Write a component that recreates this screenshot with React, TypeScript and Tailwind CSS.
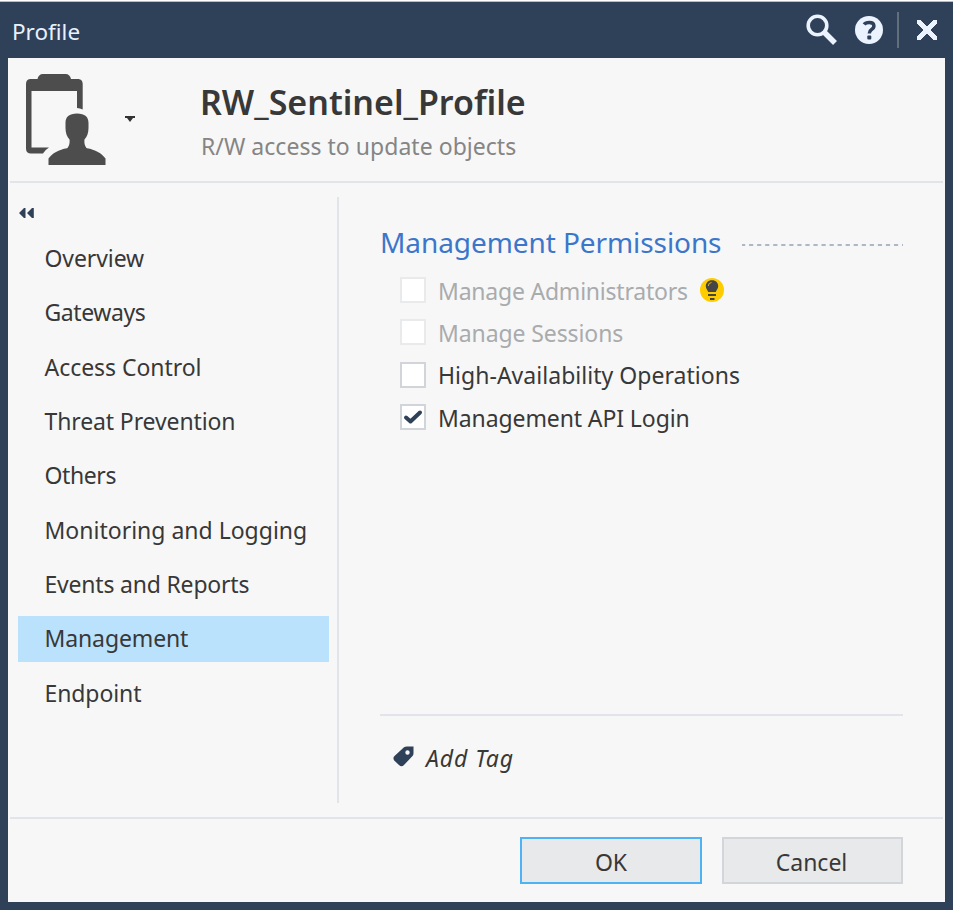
import React from "react";

const navItems = [
  { label: "Overview", tracking: "tracking-[-0.1px]" },
  { label: "Gateways", tracking: "tracking-[-0.4px]" },
  { label: "Access Control", tracking: "tracking-[-0.05px]" },
  { label: "Threat Prevention", tracking: "tracking-[-0.12px]" },
  { label: "Others", tracking: "tracking-[-0.4px]" },
  { label: "Monitoring and Logging", tracking: "tracking-normal" },
  { label: "Events and Reports", tracking: "tracking-[-0.2px]" },
  { label: "Management", tracking: "tracking-[-0.12px]", active: true },
  { label: "Endpoint", tracking: "tracking-[-0.1px]" },
];

const permissions = [
  { label: "Manage Administrators", disabled: true, hint: true, tracking: "tracking-[-0.22px]" },
  { label: "Manage Sessions", disabled: true, tracking: "tracking-[-0.1px]" },
  { label: "High-Availability Operations", tracking: "tracking-[0.03px]" },
  { label: "Management API Login", checked: true, tracking: "tracking-[-0.1px]" },
];

function ProfileIcon() {
  return (
    <svg width="82" height="92" viewBox="25 73 82 92" className="block" fill="#4d4d4d">
      <path
        fillRule="evenodd"
        d="M30 79H37.500C38 76 40 74 43 74H65.500C68.500 74 70.500 76 71 79H78.500Q82.700 79.500 82.700 84V109.500Q80 108.300 77 108V91H31.500V147.500H49Q45.500 149.500 43 153.500H31Q26 153.500 26 148.500V84Q26 79.500 30 79Z"
      />
      <path d="M77 113.500C85 113.500 88.500 117 88.500 123V128C88.500 133 87 137 84.500 139.500C84 143 85 147 87 148.300C95 149.500 102 153.500 105.500 158.500V165H48.500V158.500C52 153.500 59 149.500 67 148.300C69 147 70 143 69.500 139.500C67 137 65.500 133 65.500 128V123C65.500 117 69 113.500 77 113.500Z" />
    </svg>
  );
}

function TitleBar() {
  return (
    <header className="flex h-14 shrink-0 items-center bg-[#2f4059] pl-1">
      <span className="mt-[3px] text-[22.5px] leading-8 text-[#e8f1ff]">Profile</span>
      <div className="ml-auto flex items-center">
        <svg width="34" height="34" viewBox="805 12 34 34" className="mr-4 block" fill="none" stroke="#ebf3ff">
          <circle cx="817.500" cy="24.500" r="9.300" strokeWidth="3.600" />
          <path d="M824.500 31.500L835 42" strokeWidth="5.500" />
        </svg>
        <svg width="28" height="28" viewBox="0 0 28 28" className="block">
          <circle cx="14" cy="14" r="14" fill="#ebf3ff" />
          <path d="M9.200 8.500Q10.500 6.500 14.300 6.500Q18.900 6.500 18.900 10.100Q18.900 12.300 16.300 13.700Q14.300 15 14.300 17.500" fill="none" stroke="#2f4059" strokeWidth="3.500" />
          <rect x="12.300" y="19.500" width="4" height="4" rx="1" fill="#2f4059" />
        </svg>
        <div className="ml-[14px] h-9 w-0.5 bg-[#646f7c]" />
        <svg width="20" height="20" viewBox="0 0 20 20" className="mr-2 ml-[18px] block" fill="#ebf3ff" shapeRendering="crispEdges">
          <path d="M0 0H4L10 7L16 0H20V4L13 10L20 16V20H16L10 13L4 20H0V16L7 10L0 4Z" />
        </svg>
      </div>
    </header>
  );
}

function HintBulb() {
  return (
    <svg width="24" height="24" viewBox="0 0 24 24" className="mb-[3px] ml-3 block">
      <circle cx="12" cy="12" r="12" fill="#ffcc00" />
      <path d="M12 2.300C16 2.300 18.200 5 18.200 8.200C18.200 10.500 16.500 11.800 15.800 14H8.200C7.500 11.800 5.800 10.500 5.800 8.200C5.800 5 8 2.300 12 2.300Z" fill="#454545" />
      <path d="M8.300 8Q8.300 4.800 11.500 4.500" fill="none" stroke="#dcb21a" strokeWidth="1" />
      <path d="M8 17H16M10 21H14.500" stroke="#454545" strokeWidth="2" />
    </svg>
  );
}

export default function App() {
  return (
    <div className="flex h-[912px] w-[954px] flex-col bg-white font-['Noto_Sans','Open_Sans',sans-serif] text-[23px] text-[#383838]">
      <div className="mt-px flex h-[909px] w-[953px] flex-col border-t border-[#b9bec6] bg-[#2f4059] pr-2 pb-2 pl-2">
        <TitleBar />
        <main className="flex min-h-0 w-[937px] flex-1 flex-col bg-[#f7f7f7]">
          <section className="mr-0.5 ml-0.5 flex h-[125px] shrink-0 items-start border-b-2 border-[#e1e5e9]">
            <div className="mt-[15px] ml-[15px]">
              <ProfileIcon />
            </div>
            <svg width="10" height="6" viewBox="0 0 10 6" className="mt-[58px] ml-[18px] block">
              <path d="M0 0H10V2H8L5 6L2 2H0Z" fill="#333" />
            </svg>
            <div className="mt-[21px] ml-[65px]">
              <h1 className="text-[34px] leading-[46px] font-semibold">RW_Sentinel_Profile</h1>
              <p className="mt-[5px] pl-px text-[23px] leading-[32px] tracking-[0.03px] text-[#858585]">R/W access to update objects</p>
            </div>
          </section>

          <div className="mr-0.5 ml-0.5 flex h-[636px] shrink-0 border-b-2 border-[#e1e5e9]">
            <nav className="flex w-[327px] shrink-0 flex-col pt-[25px] pl-2">
              <svg width="16" height="10" viewBox="0 0 16 10" className="ml-px block" fill="#2f4059">
                <path d="M0 5L5 0H6.500V10H5ZM8 5L13 0H14.800V10H13Z" />
              </svg>
              <ul className="mt-[17px] flex flex-col gap-[8.4px]">
                {navItems.map((item) => (
                  <li
                    key={item.label}
                    className={`flex h-[46px] w-[311px] items-center pl-[26.5px] whitespace-nowrap ${item.active ? "bg-[#bbe2fd]" : ""} ${item.tracking}`}
                  >
                    {item.label}
                  </li>
                ))}
              </ul>
            </nav>
            <section className="mt-[14px] mb-[14px] flex flex-1 flex-col border-l-2 border-[#e1e5e9] pr-10 pl-[41px]">
              <div className="mt-[26px] flex h-[40px] items-center">
                <h2 className="-mt-0.5 text-[28px] leading-10 tracking-[-0.08px] whitespace-nowrap text-[#3c76cb]">Management Permissions</h2>
                <svg width="161" height="2" className="mt-1 ml-auto block">
                  <path d="M-1 1H161" stroke="#aeb7c6" strokeWidth="2" strokeDasharray="4.2 3.85" />
                </svg>
              </div>
              <ul className="mt-[7px] ml-5">
                {permissions.map((p) => (
                  <li key={p.label} className="flex h-[42.3px] items-center whitespace-nowrap">
                    <span className={`-mt-0.5 flex size-[26px] items-center justify-center border-2 bg-white ${p.disabled ? "border-[#e8eaec]" : "border-[#d1d5da]"}`}>
                      {p.checked && (
                        <svg width="20" height="16" viewBox="0 0 20 16" className="block" fill="none" stroke="#2f4059" strokeWidth="4">
                          <path d="M3 8.500L7.500 12.500L17 3.500" strokeLinejoin="round" strokeLinecap="round" />
                        </svg>
                      )}
                    </span>
                    <span className={`ml-3 ${p.disabled ? "text-[#a9abad]" : ""} ${p.tracking}`}>{p.label}</span>
                    {p.hint && <HintBulb />}
                  </li>
                ))}
              </ul>
              <div className="mt-auto mb-[28px] flex h-[61px] items-center border-t-2 border-[#e1e5e9] pt-[25px] pl-[13px]">
                <svg width="21" height="21" viewBox="0 0 21 21" className="-mt-1 mr-3 block">
                  <path fillRule="evenodd" d="M11 1.200Q12 .5 14 .4L20.500 .5V7.500Q20.400 9 19.500 10L11 19Q8.500 21.500 6 19L1.200 14.500Q-.5 12 1.500 10ZM14.500 4.300A2.200 2.200 0 1 0 14.510 8.700A2.200 2.200 0 1 0 14.500 4.300Z" fill="#2f4059" />
                </svg>
                <span className="tracking-[0.9px] italic">Add Tag</span>
              </div>
            </section>
          </div>

          <footer className="flex justify-end gap-5 pt-[18px] pr-[42px]">
            <button className="h-[47px] w-[182px] border-2 border-[#4eb3f5] bg-[#e8e9ea] pt-[3px]">OK</button>
            <button className="h-[47px] w-[181px] border-2 border-[#d2d6db] bg-[#e8e9ea] pt-[3px] pr-0.5">Cancel</button>
          </footer>
        </main>
      </div>
    </div>
  );
}
